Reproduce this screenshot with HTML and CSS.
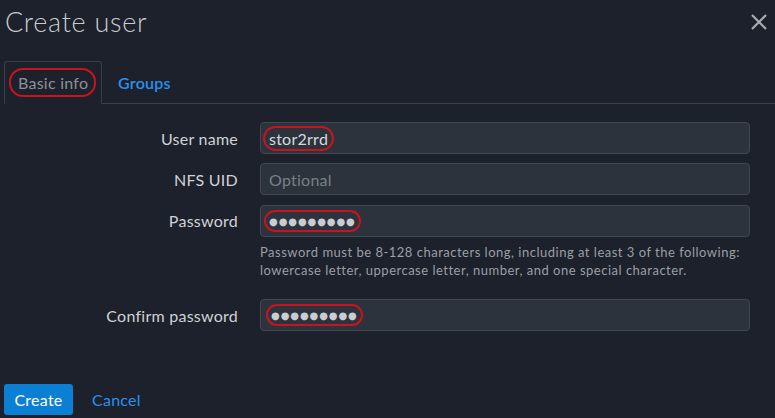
FILE: index.html
```html
<!DOCTYPE html>
<html>
<head>
<meta charset="utf-8">
<link rel="stylesheet" href="styles.css">
</head>
<body>
<div class="modal">
  <div class="header">
    <h1 class="title">Create user</h1>
    <button class="close" aria-label="Close">
      <svg width="16" height="16" viewBox="0 0 16 16"><path d="M1 1L15 15M15 1L1 15" stroke="#a9acb1" stroke-width="2.2" fill="none"/></svg>
    </button>
  </div>
  <div class="tabs">
    <div class="tab active"><span class="mark mark-tab">Basic info</span></div>
    <div class="tab link">Groups</div>
    <div class="tab-rest"></div>
  </div>
  <div class="form">
    <div class="row">
      <label class="label">User name</label>
      <div class="field"><div class="input"><span class="mark mark-val">stor2rrd</span></div></div>
    </div>
    <div class="row">
      <label class="label">NFS UID</label>
      <div class="field"><div class="input placeholder">Optional</div></div>
    </div>
    <div class="row top">
      <label class="label">Password</label>
      <div class="field">
        <div class="input"><span class="mark mark-dots">●●●●●●●●●</span></div>
        <p class="help">Password must be 8-128 characters long, including at least 3 of the following: lowercase letter, uppercase letter, number, and one special character.</p>
      </div>
    </div>
    <div class="row confirm">
      <label class="label">Confirm password</label>
      <div class="field"><div class="input"><span class="mark mark-dots mark-dots2">●●●●●●●●●</span></div></div>
    </div>
  </div>
  <div class="footer">
    <button class="btn-primary">Create</button>
    <button class="btn-link">Cancel</button>
  </div>
</div>
</body>
</html>
```
FILE: styles.css
```css
html, body {
  margin: 0;
  padding: 0;
  background: #1c212b;
  height: 100%;
}
body {
  font-family: "Lato", "Open Sans", sans-serif;
  color: #d2d4d8;
}
.modal {
  width: 775px;
  height: 418px;
  box-sizing: border-box;
  display: flex;
  flex-direction: column;
}
.header {
  display: flex;
  justify-content: space-between;
  align-items: flex-start;
  padding: 4px 5px 0 5px;
  height: 57px;
  box-sizing: border-box;
}
.title {
  margin: 0;
  font-weight: 300;
  font-size: 27px;
  line-height: 36px;
  color: #c9cbcf;
  letter-spacing: 0.7px;
}
.close {
  background: none;
  border: 0;
  padding: 0;
  margin: 10px 3px 0 0;
  width: 16px;
  height: 16px;
  display: flex;
}
.tabs {
  display: flex;
  margin-top: 4px;
  padding-left: 4px;
  height: 43px;
  box-sizing: border-box;
}
.tab {
  display: flex;
  align-items: center;
  font-size: 16px;
  letter-spacing: 0.25px;
  box-sizing: border-box;
  border-bottom: 1px solid #3a404a;
}
.tab.active {
  border: 1px solid #3a404a;
  border-bottom-color: transparent;
  border-radius: 3px 3px 0 0;
  width: 98px;
  padding-left: 4px;
  color: #8d9097;
}
.tab.link {
  color: #2a90ec;
  font-weight: 600;
  padding: 0 16px;
}
.tab-rest {
  flex: 1;
  border-bottom: 1px solid #3a404a;
}
.mark {
  border: 2px solid #c8141e;
  border-radius: 14px;
  box-sizing: border-box;
  display: inline-flex;
  align-items: center;
}
.mark-tab {
  height: 29px;
  padding: 0 6px 0 7px;
}
.mark-val {
  height: 25px;
  padding: 0 4px;
  font-size: 16px;
  letter-spacing: 0.25px;
  color: #d8dadd;
  margin-left: -1px;
}
.mark-dots {
  height: 22px;
  padding: 0 3px 0 3px;
  font-size: 10px;
  letter-spacing: 0.9px;
  color: #c9ccd0;
  font-family: "DejaVu Sans", sans-serif;
}
.mark-dots2 {
  margin-left: 2px;
}
.form {
  padding: 18px 25px 0 0;
  display: flex;
  flex-direction: column;
  gap: 9px;
}
.row {
  display: grid;
  grid-template-columns: 238px 1fr;
  column-gap: 22px;
  align-items: center;
}
.row.top {
  align-items: start;
  margin-top: 1px;
}
.row.top .label {
  line-height: 32px;
}
.row.confirm {
  margin-top: 11px;
}
.label {
  text-align: right;
  font-size: 16px;
  letter-spacing: 0.25px;
  color: #d0d2d6;
}
.input {
  height: 32px;
  box-sizing: border-box;
  background: #2d333c;
  border: 1px solid #414852;
  border-radius: 4px;
  display: flex;
  align-items: center;
  padding: 0 3px;
  font-size: 16px;
}
.input.placeholder {
  color: #7b7f86;
  padding-left: 8px;
  letter-spacing: 0.25px;
}
.help {
  margin: 6px 0 0 0;
  font-size: 13px;
  letter-spacing: 0.5px;
  line-height: 18px;
  color: #9b9fa6;
}
.footer {
  margin-top: auto;
  padding: 0 0 3px 4px;
  display: flex;
  align-items: center;
  gap: 19px;
}
.btn-primary {
  background: #0b7fd4;
  color: #fff;
  border: 0;
  border-radius: 3px;
  height: 31px;
  width: 69px;
  font-family: inherit;
  font-size: 16px;
  letter-spacing: 0.25px;
  padding: 0;
}
.btn-link {
  background: none;
  border: 0;
  color: #2a90ec;
  font-family: inherit;
  font-size: 16px;
  letter-spacing: 0.25px;
  padding: 0;
}
```
